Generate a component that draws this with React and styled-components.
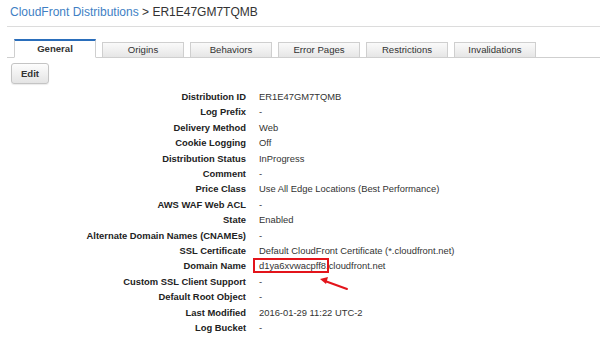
import styled, { createGlobalStyle } from 'styled-components'

const GlobalStyle = createGlobalStyle`
  body {
    margin: 0;
    background: #fff;
    font-family: "Liberation Sans", Arial, sans-serif;
    color: #222;
  }
`

const Page = styled.div`
  width: 600px;
  height: 353px;
  padding-left: 7px;
  box-sizing: border-box;
  overflow: hidden;
  position: relative;
`

const Breadcrumb = styled.div`
  height: 26px;
  line-height: 24px;
  padding-left: 3px;
  font-size: 12px;
  color: #333;
  border-bottom: 1px solid #dcdcdc;

  a {
    color: #3f7fc4;
    text-decoration: none;
  }
`

const TabStrip = styled.div`
  margin-top: 12px;
  display: flex;
  align-items: flex-end;
  gap: 6px;
  padding-left: 7px;
  border-bottom: 1px solid #cfcfcf;
  height: 18px;
`

const Tab = styled.div`
  width: 82px;
  box-sizing: border-box;
  height: ${p => (p.$active ? '19px' : '16px')};
  margin-bottom: -1px;
  border: 1px solid #cfcfcf;
  border-top: ${p => (p.$active ? '2px solid #2a6ebb' : '1px solid #cfcfcf')};
  border-bottom: ${p => (p.$active ? '1px solid #fff' : '1px solid #cfcfcf')};
  background: ${p => (p.$active ? '#fff' : 'linear-gradient(#fafafa, #e6e6e6)')};
  font-size: 9.6px;
  font-weight: ${p => (p.$active ? 'bold' : 'normal')};
  color: #333;
  text-align: center;
  line-height: ${p => (p.$active ? '16px' : '14px')};
`

const Toolbar = styled.div`
  padding: 5px 0 0 4px;
`

const Button = styled.button`
  width: 38px;
  height: 21px;
  padding: 0;
  border: 1px solid #c4c4c4;
  border-radius: 3px;
  background: linear-gradient(#fdfdfd, #e4e4e4);
  font-family: inherit;
  font-size: 9.6px;
  font-weight: bold;
  color: #333;
  box-shadow: 0 1px 1px rgba(0, 0, 0, 0.08);
`

const Details = styled.div`
  margin-top: 5px;
  display: grid;
  grid-template-columns: 239px auto;
  column-gap: 13px;
  font-size: 9.4px;
  line-height: 15.4px;
`

const Label = styled.div`
  text-align: right;
  font-weight: bold;
  color: #222;
`

const Value = styled.div`
  color: #333;
  white-space: nowrap;
`

const Highlight = styled.span`
  position: relative;

  &::after {
    content: '';
    position: absolute;
    left: -6px;
    right: -3px;
    top: -2px;
    bottom: -2px;
    border: 2px solid #e3141b;
  }
`

const Arrow = styled.svg`
  position: absolute;
  left: 316px;
  top: 274px;
`

const rows = [
  ['Distribution ID', 'ER1E47GM7TQMB'],
  ['Log Prefix', '-'],
  ['Delivery Method', 'Web'],
  ['Cookie Logging', 'Off'],
  ['Distribution Status', 'InProgress'],
  ['Comment', '-'],
  ['Price Class', 'Use All Edge Locations (Best Performance)'],
  ['AWS WAF Web ACL', '-'],
  ['State', 'Enabled'],
  ['Alternate Domain Names (CNAMEs)', '-'],
  ['SSL Certificate', 'Default CloudFront Certificate (*.cloudfront.net)'],
  ['Domain Name', null],
  ['Custom SSL Client Support', '-'],
  ['Default Root Object', '-'],
  ['Last Modified', '2016-01-29 11:22 UTC-2'],
  ['Log Bucket', '-'],
]

const tabs = ['General', 'Origins', 'Behaviors', 'Error Pages', 'Restrictions', 'Invalidations']

export default function App() {
  return (
    <>
      <GlobalStyle />
      <Page>
        <Breadcrumb>
          <a href="#">CloudFront Distributions</a> &gt; ER1E47GM7TQMB
        </Breadcrumb>
        <TabStrip>
          {tabs.map((t, i) => (
            <Tab key={t} $active={i === 0}>{t}</Tab>
          ))}
        </TabStrip>
        <Toolbar>
          <Button>Edit</Button>
        </Toolbar>
        <Details>
          {rows.map(([label, value]) => [
            <Label key={label + 'l'}>{label}</Label>,
            <Value key={label + 'v'}>
              {value === null ? (
                <>
                  <Highlight>d1ya6xvwacpff8</Highlight>.cloudfront.net
                </>
              ) : (
                value
              )}
            </Value>,
          ])}
        </Details>
        <Arrow width="36" height="20" viewBox="0 0 36 20">
          <line x1="31" y1="15" x2="9" y2="7" stroke="#e3141b" strokeWidth="2" strokeLinecap="round" />
          <polygon points="4,5 12,3 10,10" fill="#e3141b" />
        </Arrow>
      </Page>
    </>
  )
}
